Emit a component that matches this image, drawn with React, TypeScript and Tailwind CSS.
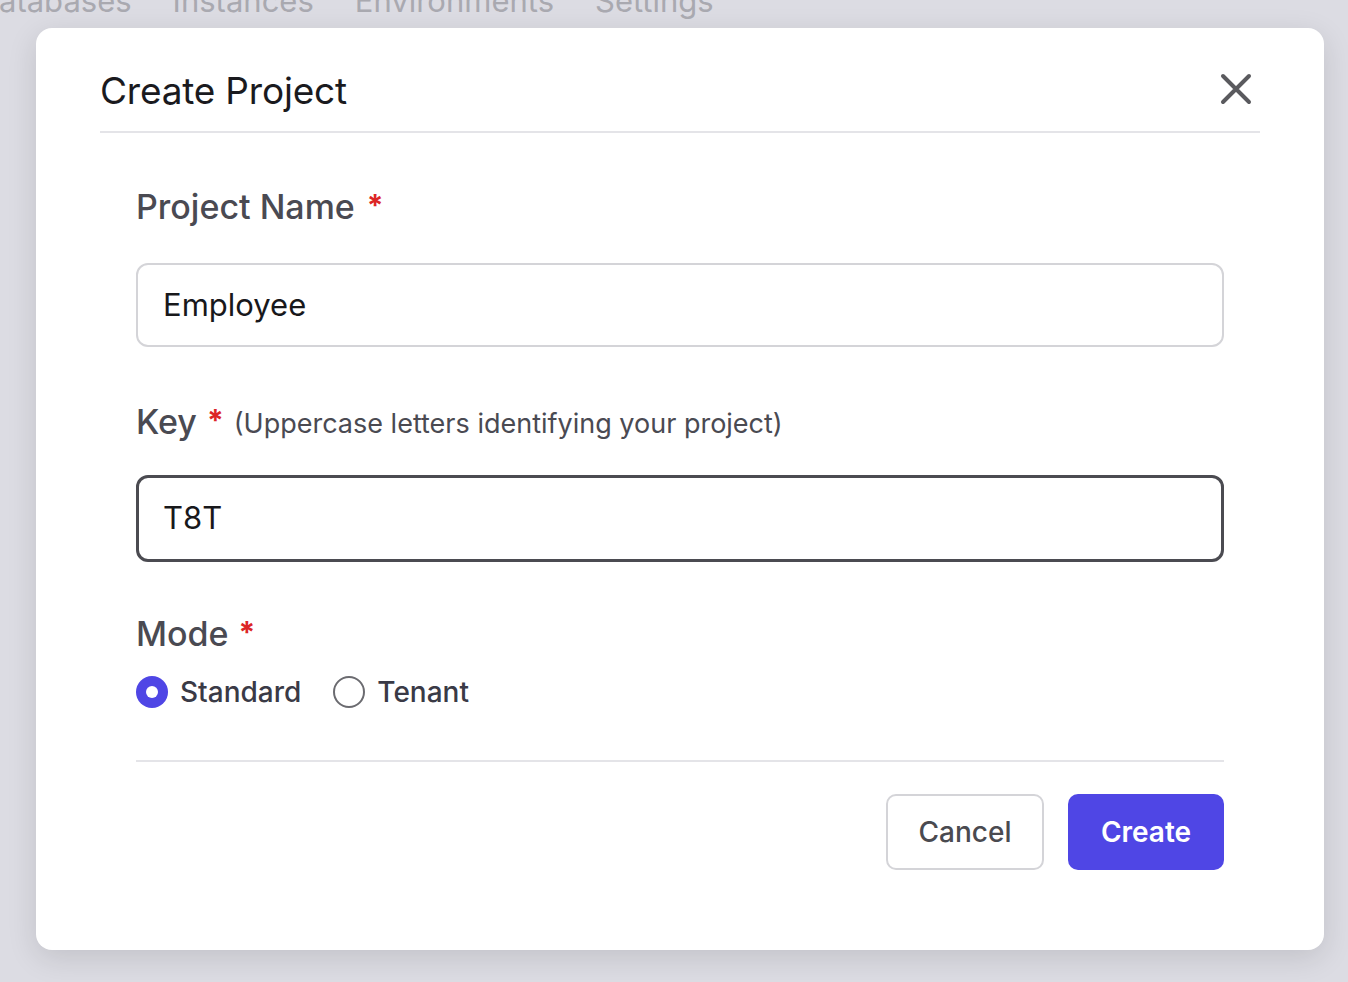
import { useState } from "react";

export default function App() {
  const [mode, setMode] = useState("standard");

  return (
    <div
      className="h-[982px] w-full overflow-hidden bg-[#dcdce3] text-[#1f1f23]"
      style={{ fontFamily: "Inter, 'Noto Sans', sans-serif" }}
    >
      {/* Page behind the overlay */}
      <div className="flex h-[28px] items-start overflow-hidden">
        <nav className="-mt-[17px] flex gap-[41px] text-[31px] leading-[36px] text-[#a9a9b0]">
          <span className="-ml-[1px]">atabases</span>
          <span>Instances</span>
          <span>Environments</span>
          <span>Settings</span>
        </nav>
      </div>

      {/* Modal */}
      <div className="ml-[36px] h-[922px] w-[1288px] rounded-[16px] bg-white shadow-[0_8px_30px_rgba(0,0,0,0.12)]">
        {/* Header */}
        <div className="mx-[64px] flex h-[105px] items-end justify-between border-b-2 border-[#e4e4e8] pb-[18px]">
          <h1 className="text-[37px] font-normal leading-[44px] tracking-[-0.2px] text-[#1a1a1e]">Create Project</h1>
          <button className="mb-[8px] mr-[8px] text-[#5a5a5e]">
            <svg width="32" height="32" viewBox="0 0 32 32" fill="none" stroke="currentColor" strokeWidth="4" strokeLinecap="round">
              <path d="M3 3L29 29M29 3L3 29" />
            </svg>
          </button>
        </div>

        <div className="mx-[100px] pt-[52px]">
          {/* Project Name */}
          <label className="flex items-start gap-[12px] text-[34px] font-medium leading-[44px] text-[#4a4a52]">
            Project Name
            <span className="mt-[6px] text-[30px] font-bold leading-[28px] text-[#dc2626]">*</span>
          </label>
          <div className="mt-[34px] flex h-[84px] items-center rounded-[12px] border-2 border-[#d4d4d8] px-[25px] text-[31px] text-[#18181b]">
            Employee
          </div>

          {/* Key */}
          <label className="mt-[53px] flex items-start text-[34px] font-medium leading-[44px] text-[#4a4a52]">
            Key
            <span className="ml-[10px] mt-[6px] text-[30px] font-bold leading-[28px] text-[#dc2626]">*</span>
            <span className="ml-[10px] mt-[4px] text-[27px] font-normal leading-[40px] text-[#4a4a52]">
              (Uppercase letters identifying your project)
            </span>
          </label>
          <div className="mt-[31px] flex h-[87px] items-center rounded-[12px] border-[3px] border-[#4b4b51] px-[24px] text-[31px] text-[#18181b]">
            T8T
          </div>

          {/* Mode */}
          <label className="mt-[50px] flex items-start gap-[10px] text-[34px] font-medium leading-[44px] text-[#4a4a52]">
            Mode
            <span className="mt-[6px] text-[30px] font-bold leading-[28px] text-[#dc2626]">*</span>
          </label>
          <div className="mt-[16px] flex items-center gap-[32px]">
            <button className="flex items-center gap-[12px]" onClick={() => setMode("standard")}>
              {mode === "standard" ? (
                <span className="flex h-[32px] w-[32px] items-center justify-center rounded-full bg-[#4f46e5]">
                  <span className="h-[12px] w-[12px] rounded-full bg-white" />
                </span>
              ) : (
                <span className="h-[32px] w-[32px] rounded-full border-2 border-[#6b6b70]" />
              )}
              <span className="text-[28px] font-medium leading-[40px] text-[#3a3a46]">Standard</span>
            </button>
            <button className="flex items-center gap-[12px]" onClick={() => setMode("tenant")}>
              {mode === "tenant" ? (
                <span className="flex h-[32px] w-[32px] items-center justify-center rounded-full bg-[#4f46e5]">
                  <span className="h-[12px] w-[12px] rounded-full bg-white" />
                </span>
              ) : (
                <span className="h-[32px] w-[32px] rounded-full border-2 border-[#6b6b70]" />
              )}
              <span className="text-[28px] font-medium leading-[40px] text-[#3a3a46]">Tenant</span>
            </button>
          </div>
        </div>

        {/* Footer */}
        <div className="mx-[100px] mt-[48px] flex justify-end gap-[24px] border-t-2 border-[#e4e4e8] pt-[32px]">
          <button className="h-[76px] w-[158px] rounded-[10px] border-2 border-[#d4d4d8] bg-white text-[28px] font-medium text-[#4a4a50]">
            Cancel
          </button>
          <button className="h-[76px] w-[156px] rounded-[10px] bg-[#4f46e5] text-[28px] font-semibold text-white">
            Create
          </button>
        </div>
      </div>
    </div>
  );
}
